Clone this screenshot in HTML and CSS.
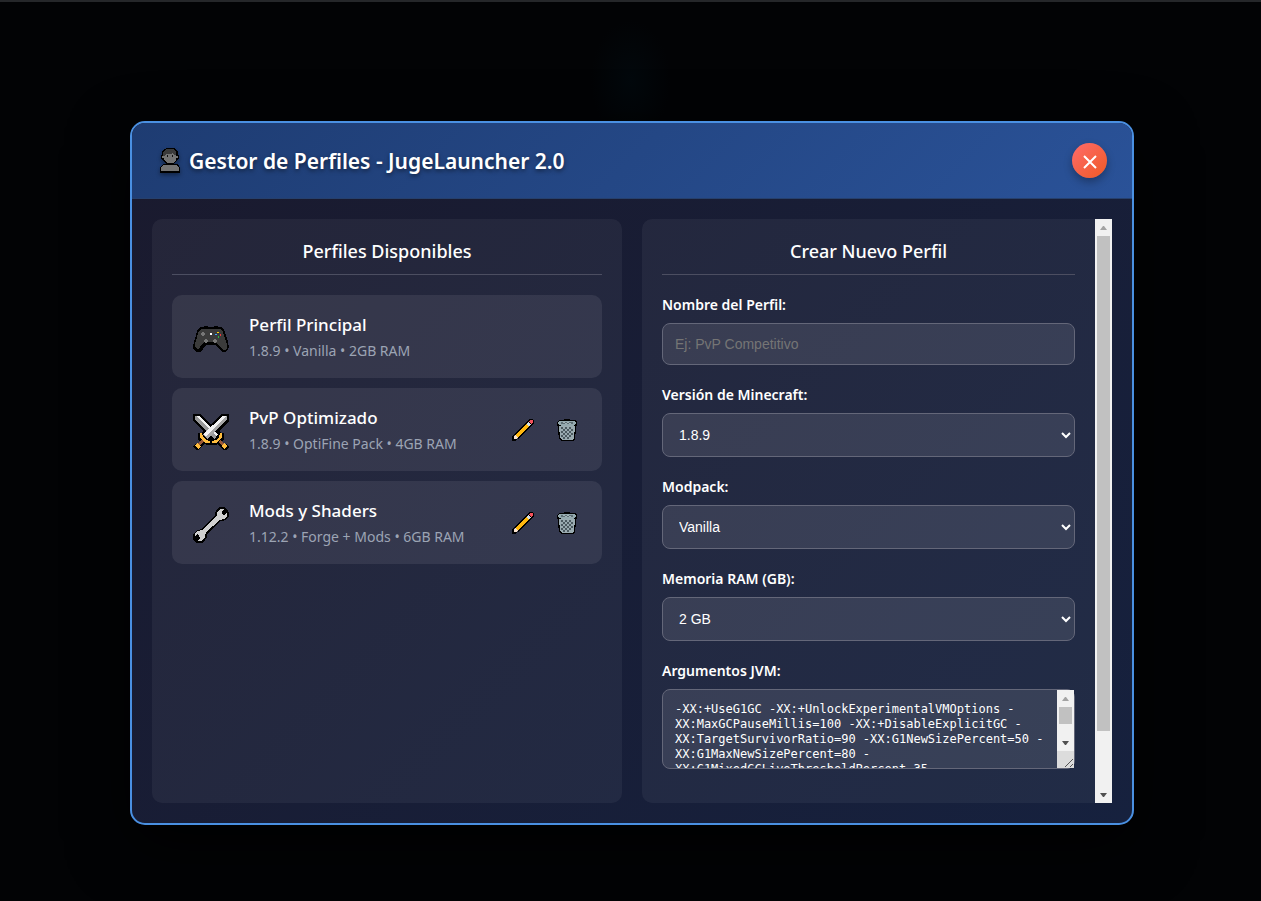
FILE: index.html
```html
<!DOCTYPE html>
<html lang="es">
<head>
<meta charset="utf-8">
<title>Gestor de Perfiles - JugeLauncher 2.0</title>
<link rel="stylesheet" href="styles.css">
</head>
<body>
<svg width="0" height="0" class="sprites" aria-hidden="true">
  <symbol id="pencil" viewBox="0 0 22 22">
    <path d="M4 18L18.500 3.500" stroke="#000" stroke-width="7" fill="none"/>
    <path d="M17 0h3l2 2v3l-3 2-4-4zM1 16l5 4-3 2H0v-3z" fill="#000"/>
    <path d="M4.500 17.500L16 6" stroke="#ffb70f" stroke-width="4" fill="none"/>
    <path d="M15.500 6.500L17.500 4.500" stroke="#d3e0e4" stroke-width="4" fill="none"/>
    <path d="M17 2l1-1h2l1 1v2l-2 1-2-2z" fill="#f4515c"/>
    <path d="M3 16l3 3-2 1H2v-2z" fill="#fbe3cf"/>
  </symbol>
  <symbol id="trash" viewBox="0 0 20 22">
    <path d="M7 0h6v1h5l2 2v4h-1v4l-1 9-2 2H4l-2-2-1-9V7H0V3l2-2h5z" fill="#000"/>
    <path d="M2 7h16l-1 12-2 2H5l-2-2z" fill="#9aabb0"/>
    <path d="M4 8h2v2H4zM8 8h2v2H8zM12 8h2v2h-2zM6 10h2v2H6zM10 10h2v2h-2zM14 10h2v2h-2zM4 12h2v2H4zM8 12h2v2H8zM12 12h2v2h-2zM6 14h2v2H6zM10 14h2v2h-2zM14 14h2v2h-2zM4 16h2v2H4zM8 16h2v2H8zM12 16h2v2h-2zM6 18h2v2H6zM10 18h2v2h-2z" fill="#4c5a60"/>
    <path d="M2 2h16l1 2-1 2-3 1H5L2 6 1 4z" fill="#94a9ae"/>
    <path d="M4 3h12v2H4z" fill="#5e6f75"/>
    <path d="M6 3h2v1H6zM10 3h2v1h-2zM8 4h2v1H8zM12 4h2v1h-2z" fill="#a4b5b9"/>
  </symbol>
  <symbol id="arrow-up" viewBox="0 0 17 17"><path d="M5 11h7L9 7H8z" fill="#a3a3a3"/></symbol>
  <symbol id="arrow-down" viewBox="0 0 17 17"><path d="M5 7h7l-3 4H8z" fill="#505050"/></symbol>
</svg>
<div class="overlay">
  <main class="modal" role="dialog" aria-labelledby="title">
    <header class="modal-header">
      <h2 class="modal-title" id="title">
        <svg class="title-icon" viewBox="0 0 20 25" shape-rendering="crispEdges" aria-hidden="true">
          <path d="M7 0h6l3 1 2 3v3h1v4h-1l-2 3-3 2h4l2 2 1 2v5H0v-5l1-2 2-2h4l-3-2-2-3H1V7h1V4l2-3z" fill="#000"/>
          <path d="M4 5h12v3h2v2h-2v2l-3 3H7l-3-3v-2H2V8h2z" fill="#747474"/>
          <path d="M7 1h6l3 2v4h-2l-1-2-3 1H6L4 8H3V5l1-2z" fill="#3b3b3b"/>
          <path d="M7 7h1v2H7zM12 7h1v2h-1z" fill="#111"/>
          <path d="M3 17h14l2 3v3H1v-3z" fill="#747474"/>
        </svg>
        <span>Gestor de Perfiles - JugeLauncher 2.0</span>
      </h2>
      <button class="close" type="button" aria-label="Cerrar">
        <svg viewBox="0 0 14 14" aria-hidden="true"><path d="M1 1l12 12M13 1L1 13" stroke="#fff" stroke-width="2" fill="none"/></svg>
      </button>
    </header>
    <div class="modal-body">
      <section class="panel">
        <h3 class="panel-title">Perfiles Disponibles</h3>
        <ul class="profiles">
          <li class="profile">
            <svg class="profile-icon" viewBox="0 0 36 36" shape-rendering="crispEdges" aria-hidden="true">
              <path d="M8 6h3V5h4v1h6V5h4v1h3l3 2 2 6 2 7 1 5-1 3-3 2h-3l-3-3-3-4H13l-3 4-3 3H4l-3-2-1-3 1-5 2-7 2-6z" fill="#000"/>
              <path d="M9 8h18l3 3 2 6 2 7v3l-2 2h-2l-3-3-3-4-2-1H12l-2 1-3 4-2 2H4l-2-2v-3l2-7 2-6z" fill="#3b3b3b"/>
              <path d="M9 11h2v4H9zM8 12h4v2H8zM12 18h2v4h-2zM11 19h4v2h-4zM21 18h2v4h-2zM20 19h4v2h-4z" fill="#777"/>
              <path d="M17 12h2v2h-2z" fill="#fff"/>
              <path d="M24 11h2v1h-2z" fill="#ffd500"/>
              <path d="M22 13h2v1h-2z" fill="#36a1ff"/>
              <path d="M27 13h1v2h-1z" fill="#ef3838"/>
              <path d="M25 15h1v2h-1z" fill="#26b83b"/>
            </svg>
            <div class="profile-info">
              <span class="profile-name">Perfil Principal</span>
              <span class="profile-meta">1.8.9 • Vanilla • 2GB RAM</span>
            </div>
          </li>
          <li class="profile">
            <svg class="profile-icon" viewBox="0 0 36 36" shape-rendering="crispEdges" aria-hidden="true">
              <path d="M0 0h7l11 10L29 0h7v7L26 17l2 2h3v6l-2 3 6 3 1 2-3 3h-3l-5-6-3 1h-8l-3-1-5 6H3l-3-3 1-2 6-3-2-3v-6h3l2-2L0 7z" fill="#000"/>
              <path d="M2 2h4l19 18-3 5L2 6z" fill="#999"/>
              <path d="M4 2h2l19 18-2 2z" fill="#f2f2f2"/>
              <path d="M30 2h4v4L14 25l-4-5z" fill="#a7a7a7"/>
              <path d="M30 2h3L13 23l-3-3z" fill="#f2f2f2"/>
              <path d="M7 19h2l1 4 3 3 4 1v2h-4l-4-3-2-3zM29 19h-2l-1 4-3 3-4 1v2h4l4-3 2-3z" fill="#ffbd3e"/>
              <path d="M9 26l2 2-5 4-2-2zM27 26l-2 2 5 4 2-2z" fill="#9a5936"/>
              <path d="M4 29l4 3-3 3-3-3zM32 29l-4 3 3 3 3-3z" fill="#ffbd3e"/>
            </svg>
            <div class="profile-info">
              <span class="profile-name">PvP Optimizado</span>
              <span class="profile-meta">1.8.9 • OptiFine Pack • 4GB RAM</span>
            </div>
            <div class="actions">
              <button class="action" type="button" aria-label="Editar PvP Optimizado"><svg class="pencil" shape-rendering="crispEdges"><use href="#pencil"/></svg></button>
              <button class="action" type="button" aria-label="Eliminar PvP Optimizado"><svg class="trash" shape-rendering="crispEdges"><use href="#trash"/></svg></button>
            </div>
          </li>
          <li class="profile">
            <svg class="profile-icon" viewBox="0 0 36 36" shape-rendering="crispEdges" aria-hidden="true">
              <path d="M27 0h5l1 2 2 2 1 2v3l-2 3-4 2h-3L14 27v3l-3 5-3 1H4l-3-2-1-3v-4l3-3 5-2L22 9V6l2-4z" fill="#000"/>
              <path d="M27 2h4l-2 3v2l2 1 3-2v3l-3 3-4 1L13 25l-1 5-3 4H5l2-3-1-3-2-1-2 2v-3l3-2 4-1L24 9V5z" fill="#d0d0d0"/>
            </svg>
            <div class="profile-info">
              <span class="profile-name">Mods y Shaders</span>
              <span class="profile-meta">1.12.2 • Forge + Mods • 6GB RAM</span>
            </div>
            <div class="actions">
              <button class="action" type="button" aria-label="Editar Mods y Shaders"><svg class="pencil" shape-rendering="crispEdges"><use href="#pencil"/></svg></button>
              <button class="action" type="button" aria-label="Eliminar Mods y Shaders"><svg class="trash" shape-rendering="crispEdges"><use href="#trash"/></svg></button>
            </div>
          </li>
        </ul>
      </section>
      <section class="panel panel-form">
        <div class="form-scroll">
          <h3 class="panel-title">Crear Nuevo Perfil</h3>
          <form class="form">
            <div class="group">
              <label for="name">Nombre del Perfil:</label>
              <input id="name" class="field" type="text" placeholder="Ej: PvP Competitivo">
            </div>
            <div class="group">
              <label for="version">Versión de Minecraft:</label>
              <select id="version" class="field"><option>1.8.9</option><option>1.12.2</option></select>
            </div>
            <div class="group">
              <label for="modpack">Modpack:</label>
              <select id="modpack" class="field"><option>Vanilla</option><option>OptiFine Pack</option><option>Forge + Mods</option></select>
            </div>
            <div class="group">
              <label for="ram">Memoria RAM (GB):</label>
              <select id="ram" class="field"><option>2 GB</option><option>4 GB</option><option>6 GB</option></select>
            </div>
            <div class="group">
              <label for="jvm">Argumentos JVM:</label>
              <div class="field args">
                <textarea id="jvm" spellcheck="false">-XX:+UseG1GC -XX:+UnlockExperimentalVMOptions -XX:MaxGCPauseMillis=100 -XX:+DisableExplicitGC -XX:TargetSurvivorRatio=90 -XX:G1NewSizePercent=50 -XX:G1MaxNewSizePercent=80 -XX:G1MixedGCLiveThresholdPercent=35 -XX:+AlwaysPreTouch</textarea>
                <div class="scrollbar" aria-hidden="true">
                  <svg class="arrow"><use href="#arrow-up"/></svg>
                  <div class="track"><div class="thumb thumb-args"></div></div>
                  <svg class="arrow"><use href="#arrow-down"/></svg>
                  <svg class="grip" viewBox="0 0 17 17"><path d="M8 16l8-8M13 16l3-3" stroke="#555" fill="none"/></svg>
                </div>
              </div>
            </div>
          </form>
        </div>
        <div class="scrollbar" aria-hidden="true">
          <svg class="arrow"><use href="#arrow-up"/></svg>
          <div class="track"><div class="thumb thumb-form"></div></div>
          <svg class="arrow"><use href="#arrow-down"/></svg>
        </div>
      </section>
    </div>
  </main>
</div>
</body>
</html>
```

FILE: styles.css
```css
* { box-sizing: border-box; }

body {
  margin: 0;
  background: #020305;
  color: #fff;
  font-family: "Segoe UI", "Noto Sans", sans-serif;
}

.sprites { position: absolute; }

.overlay {
  display: flex;
  justify-content: center;
  height: 100vh;
  min-height: 600px;
  padding: 119px 20px 76px 23px;
  border-top: 2px solid #25272a;
  background:
    radial-gradient(ellipse 40px 60px at 50% 78px, #02080c, transparent),
    #020305;
}

.modal {
  display: flex;
  flex-direction: column;
  width: 100%;
  max-width: 1004px;
  border: 2px solid #4a90e2;
  border-radius: 15px;
  overflow: hidden;
  background: linear-gradient(135deg, #1a1a2e, #16213e);
  box-shadow: 0 20px 60px rgba(0, 0, 0, 0.8);
}

.modal-header {
  display: flex;
  align-items: center;
  justify-content: space-between;
  padding: 20px 25px;
  background: linear-gradient(135deg, #1e3c72, #2a5298);
  border-bottom: 1px solid #26406d;
}

.modal-title {
  display: flex;
  align-items: center;
  gap: 9px;
  margin: 0;
  padding-left: 3px;
  font-size: 21px;
  font-weight: 600;
  line-height: 28px;
  text-shadow: 0 2px 4px rgba(0, 0, 0, 0.5);
}

.title-icon {
  width: 20px;
  height: 25px;
  filter: drop-shadow(0 2px 2px rgba(0, 0, 0, 0.4));
}

.close {
  display: grid;
  place-items: center;
  width: 35px;
  height: 35px;
  padding: 3px 0 0;
  border: 0;
  border-radius: 50%;
  background: linear-gradient(135deg, #ff6b6b, #ee5a24);
  box-shadow: 0 4px 8px rgba(0, 0, 0, 0.3);
}

.close svg { width: 14px; height: 14px; }

.modal-body {
  display: grid;
  grid-template-columns: 1fr 1fr;
  gap: 20px;
  flex: 1;
  min-height: 0;
  padding: 20px;
}

.panel {
  min-width: 0;
  padding: 20px;
  border-radius: 10px;
  overflow: auto;
  background: rgba(255, 255, 255, 0.05);
}

.panel-form {
  display: flex;
  padding: 0;
  border-radius: 10px 0 0 10px;
  overflow: hidden;
}

.form-scroll {
  flex: 1;
  min-width: 0;
  padding: 20px;
  overflow-y: auto;
}

.panel-title {
  margin: 0 0 20px;
  padding-bottom: 10px;
  border-bottom: 1px solid #4c4e61;
  font-size: 18px;
  font-weight: 500;
  line-height: 25px;
  text-align: center;
}

.profiles {
  display: flex;
  flex-direction: column;
  gap: 10px;
  margin: 0;
  padding: 0;
  list-style: none;
}

.profile {
  display: flex;
  align-items: center;
  gap: 20px;
  min-height: 83px;
  padding: 15px 19px 15px 21px;
  border-radius: 10px;
  background: rgba(255, 255, 255, 0.08);
}

.profile-icon { flex: none; width: 36px; height: 36px; margin-top: 5px; }

.profile-info {
  display: flex;
  flex: 1;
  flex-direction: column;
  gap: 4px;
}

.profile-name { font-size: 17px; font-weight: 500; line-height: 24px; }

.profile-meta { color: #9ca4b4; font-size: 14px; line-height: 20px; }

.actions { display: flex; gap: 12px; }

.action {
  display: grid;
  justify-items: center;
  align-items: start;
  width: 32px;
  height: 31px;
  padding: 5px 0 0;
  border: 0;
  background: none;
}

.pencil { width: 22px; height: 22px; }
.trash { width: 20px; height: 22px; }

.form {
  display: flex;
  flex-direction: column;
  gap: 20px;
}

.group { display: flex; flex-direction: column; gap: 8px; }

.group label { font-size: 14px; font-weight: 600; line-height: 20px; }

.field {
  width: 100%;
  border: 1px solid #646779;
  border-radius: 8px;
  background-color: rgba(255, 255, 255, 0.1);
  color: #fff;
  font-family: "Liberation Sans", Arial, sans-serif;
  font-size: 14px;
}

input.field { height: 42px; padding: 12px; }
input.field::placeholder { color: #757575; }
select.field { height: 44px; padding: 12px; }
.field option { color: #000; }

.args { display: flex; height: 80px; }

.args textarea {
  flex: 1;
  min-width: 0;
  padding: 12px;
  border: 0;
  background: none;
  color: inherit;
  resize: none;
  font-family: "DejaVu Sans Mono", "Liberation Mono", monospace;
  font-size: 12px;
  line-height: 15px;
}

.scrollbar {
  display: flex;
  flex: none;
  flex-direction: column;
  width: 17px;
  background: #f1f1f1;
}

.arrow, .grip { flex: none; width: 17px; height: 17px; }
.grip { background: #dcdcdc; }
.track { flex: 1; min-height: 0; padding: 0 2px; }
.thumb { background: #c1c1c1; }
.thumb-form { height: 90%; }
.thumb-args { height: 17px; }
```
